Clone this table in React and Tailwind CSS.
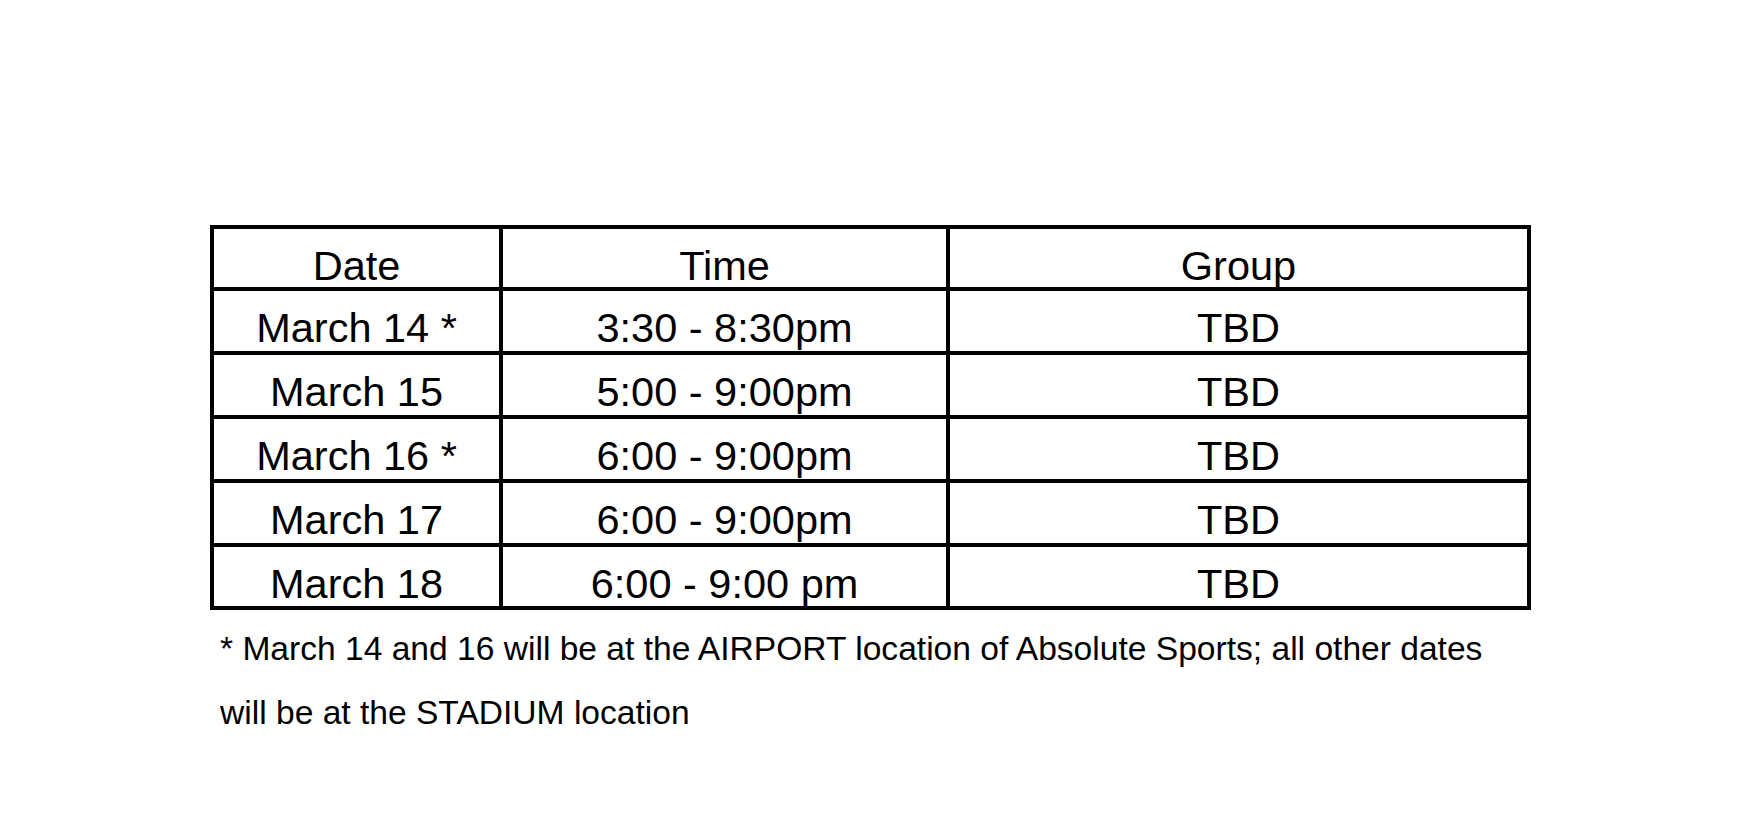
import React from "react";

const ROWS = [
  { date: "March 14 *", time: "3:30 - 8:30pm", group: "TBD", h: "h-[60px]" },
  { date: "March 15", time: "5:00 - 9:00pm", group: "TBD", h: "h-[60px]" },
  { date: "March 16 *", time: "6:00 - 9:00pm", group: "TBD", h: "h-[60px]" },
  { date: "March 17", time: "6:00 - 9:00pm", group: "TBD", h: "h-[60px]" },
  { date: "March 18", time: "6:00 - 9:00 pm", group: "TBD", h: "h-[59px]" },
];

function Cell({ children, h }) {
  return (
    <div
      className={
        "bg-white text-center text-[41.5px] leading-[41.5px] pt-[16px] whitespace-nowrap " + h
      }
    >
      {children}
    </div>
  );
}

export default function App() {
  return (
    <div
      className="min-h-screen bg-white text-black pl-[210px] pt-[225px]"
      style={{ fontFamily: '"Liberation Sans", Arial, sans-serif' }}
    >
      <div className="grid grid-cols-[285px_443px_577px] gap-[4px] p-[4px] bg-black w-[1321px]">
        <Cell h="h-[58px]">Date</Cell>
        <Cell h="h-[58px]">Time</Cell>
        <Cell h="h-[58px]">Group</Cell>
        {ROWS.map((r) => (
          <React.Fragment key={r.date}>
            <Cell h={r.h}>{r.date}</Cell>
            <Cell h={r.h}>{r.time}</Cell>
            <Cell h={r.h}>{r.group}</Cell>
          </React.Fragment>
        ))}
      </div>
      <p className="mt-[7px] pl-[10px] text-[33.6px] leading-[64px]">
        * March 14 and 16 will be at the AIRPORT location of Absolute Sports; all other dates
        <br />
        will be at the STADIUM location
      </p>
    </div>
  );
}
